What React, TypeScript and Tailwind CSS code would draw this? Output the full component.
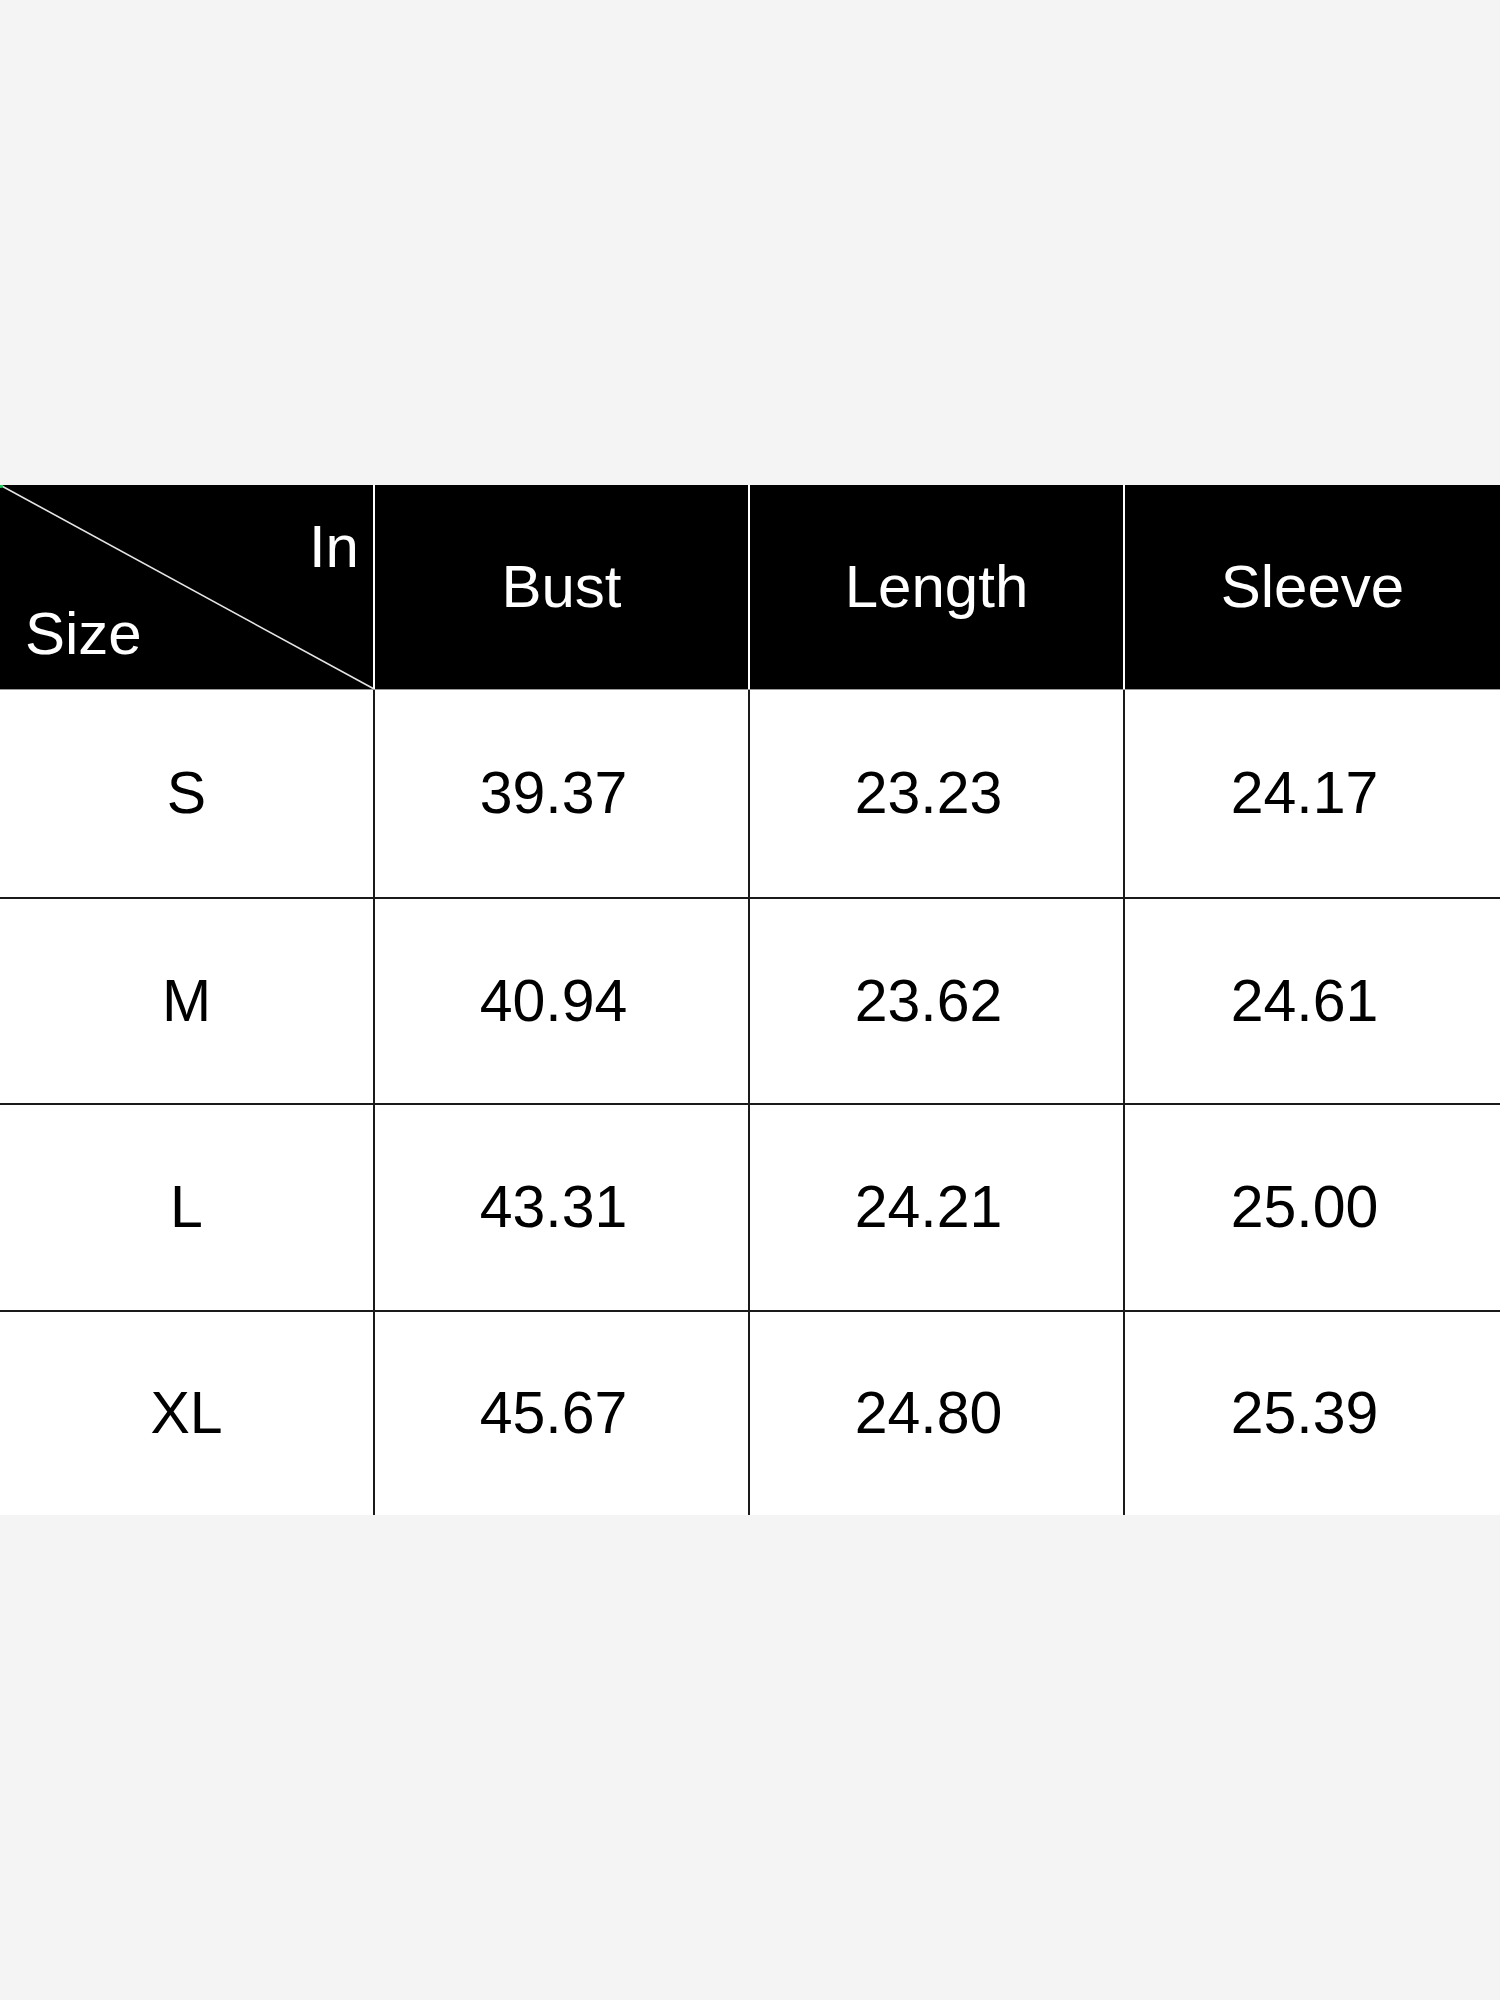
import React from 'react';

// size chart, inches
const rows = [
  { size: 'S', bust: '39.37', length: '23.23', sleeve: '24.17', h: 'h-[208px]' },
  { size: 'M', bust: '40.94', length: '23.62', sleeve: '24.61', h: 'h-[206px]' },
  { size: 'L', bust: '43.31', length: '24.21', sleeve: '25.00', h: 'h-[207px]' },
  { size: 'XL', bust: '45.67', length: '24.80', sleeve: '25.39', h: 'h-[205px]' },
];

const font = { fontFamily: '"Liberation Sans", Arial, sans-serif' };

export default function App() {
  return (
    <div className="min-h-[2000px] w-[1500px] bg-[#f4f4f4] pt-[485px]" style={font}>
      <div className="grid grid-cols-4 bg-black text-white text-[60px] leading-none">
        <div className="relative h-[204px] border-r-2 border-white flex flex-col">
          <svg className="absolute inset-0" width="374" height="204" viewBox="0 0 374 204">
            <line x1="0" y1="0" x2="374" y2="204" stroke="#e5e5e5" strokeWidth="1.6" />
            <circle cx="1" cy="1" r="2" fill="#22c55e" />
          </svg>
          <span className="self-end mt-[32px] pr-[14px]">In</span>
          <span className="self-start mt-[27px] pl-[25px]">Size</span>
        </div>
        <div className="h-[204px] border-r-2 border-white flex items-center justify-center">Bust</div>
        <div className="h-[204px] border-r-2 border-white flex items-center justify-center">Length</div>
        <div className="h-[204px] flex items-center justify-center">Sleeve</div>
      </div>
      <div className="bg-white text-black text-[59px] leading-none">
        {rows.map((r, i) => (
          <div
            key={r.size}
            className={`grid grid-cols-4 ${r.h} ${i > 0 ? 'border-t-2 border-[#1a1a1a]' : 'border-t border-[#9a9a9a]'}`}
          >
            <div className="border-r-2 border-[#1a1a1a] flex items-center justify-center">{r.size}</div>
            <div className="border-r-2 border-[#1a1a1a] flex items-center justify-center pr-4">{r.bust}</div>
            <div className="border-r-2 border-[#1a1a1a] flex items-center justify-center pr-4">{r.length}</div>
            <div className="flex items-center justify-center pr-4">{r.sleeve}</div>
          </div>
        ))}
      </div>
    </div>
  );
}
